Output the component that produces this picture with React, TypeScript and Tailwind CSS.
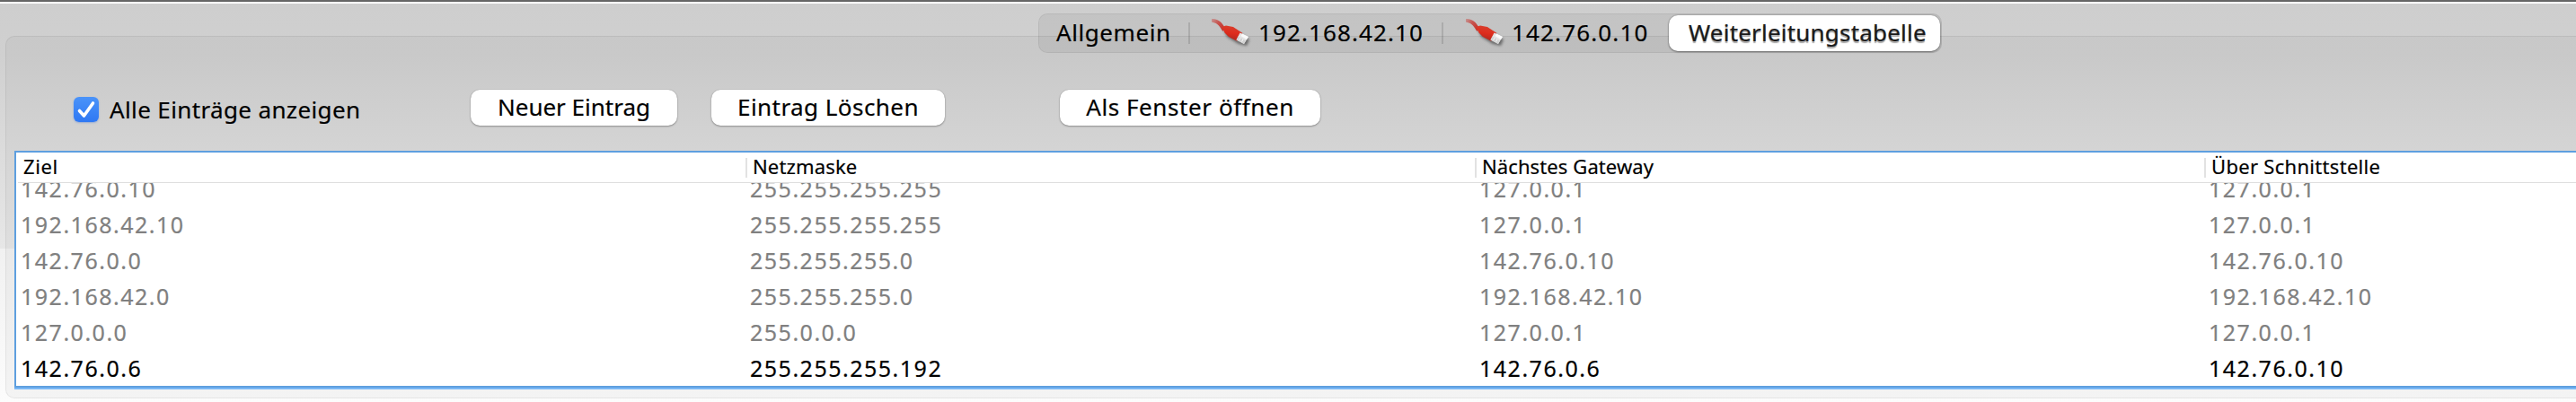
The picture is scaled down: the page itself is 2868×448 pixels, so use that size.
import React from "react";

type Entry = { cells: string[]; active?: boolean };

const columns = [
  { label: "Ziel", tracking: "tracking-[0.6px]" },
  { label: "Netzmaske", tracking: "tracking-[0.15px]" },
  { label: "Nächstes Gateway", tracking: "tracking-[0.1px]" },
  { label: "Über Schnittstelle", tracking: "tracking-[0.3px]" },
];

const entries: Entry[] = [
  { cells: ["142.76.0.10", "255.255.255.255", "127.0.0.1", "127.0.0.1"] },
  { cells: ["192.168.42.10", "255.255.255.255", "127.0.0.1", "127.0.0.1"] },
  { cells: ["142.76.0.0", "255.255.255.0", "142.76.0.10", "142.76.0.10"] },
  { cells: ["192.168.42.0", "255.255.255.0", "192.168.42.10", "192.168.42.10"] },
  { cells: ["127.0.0.0", "255.0.0.0", "127.0.0.1", "127.0.0.1"] },
  { cells: ["142.76.0.6", "255.255.255.192", "142.76.0.6", "142.76.0.10"], active: true },
];

function CableIcon() {
  return (
    <svg width="46" height="34" viewBox="0 0 46 34" className="shrink-0">
      <defs>
        <linearGradient id="cord" x1="0" y1="0" x2="1" y2="0.6">
          <stop offset="0" stopColor="#c9302a" stopOpacity="0.3" />
          <stop offset="0.5" stopColor="#c8423c" stopOpacity="0.85" />
          <stop offset="1" stopColor="#c4352d" />
        </linearGradient>
        <linearGradient id="boot" x1="0.6" y1="0" x2="0.4" y2="1">
          <stop offset="0" stopColor="#d8402f" />
          <stop offset="0.5" stopColor="#de2c1c" />
          <stop offset="1" stopColor="#a8281f" />
        </linearGradient>
        <filter id="soft" x="-30%" y="-30%" width="160%" height="160%">
          <feGaussianBlur stdDeviation="1.5" />
        </filter>
      </defs>
      <path d="M13 12 L30 16 L42 24 L39 31 L30 29 L17 21 Z" fill="#333" opacity="0.6" filter="url(#soft)" />
      <path d="M0 1 C6 0.500 11 4 14.500 10.500 L12.500 15 C9 10 8 6 0 4.500 Z" fill="url(#cord)" />
      <path d="M11.500 10 L16 8.500 L24 10 L34.500 17 C32 19 29 23 28.500 26 L19 21 L14.500 16.500 Z" fill="url(#boot)" />
      <path d="M31.500 16.500 L41 21 L36 29 L27.500 24.500 Z" fill="#e4e4e4" />
      <path d="M34 17.500 L41 21 L39 24 L32.500 20 Z" fill="#fafafa" />
      <path d="M29.500 20.500 L38 25.500 L36 29 L27.500 24.500 Z" fill="#d2d2d2" />
      <path d="M32 22 L30.500 25 M35 23.500 L33.500 26.500" stroke="#f4f4f4" strokeWidth="1" />
    </svg>
  );
}

function Push({ label, className }: { label: string; className: string }) {
  return (
    <button
      className={`flex h-10 items-center justify-center rounded-[10px] bg-white pb-[3px] text-[26px] leading-none shadow-[0_0_1px_rgba(0,0,0,0.35),0_1px_2px_rgba(0,0,0,0.3)] ${className}`}
    >
      {label}
    </button>
  );
}

export default function App() {
  return (
    <div className="h-[448px] w-[2868px] overflow-hidden border-t-2 border-[#666] bg-[linear-gradient(to_bottom,#cecece_0px,#d0d0d0_60px,#e7e7e7_275px,#f1f1f1_275px,#fcfcfc_446px)] font-['Noto_Sans',sans-serif] text-black [-webkit-text-stroke:0.2px]">
      <div className="h-0.5 bg-white" />
      <main className="mt-9 ml-1.5 h-[404px] rounded-l-[10px] border border-r-0 border-black/6 bg-black/3 pl-[9px]">
        <nav className="-mt-[26px] ml-[1140px] flex h-11 w-[1006px] items-center rounded-[10px] border border-black/6 bg-black/5 text-[26px] leading-none">
          <div className="w-[166px] pl-[19px] pb-[2px] tracking-[0.57px]">Allgemein</div>
          <div className="h-6 w-0.5 bg-black/12" />
          <div className="flex w-[280px] items-center pl-6">
            <CableIcon />
            <span className="pl-[6px] pb-[2px] tracking-[1.1px]">192.168.42.10</span>
          </div>
          <div className="h-6 w-0.5 bg-black/12" />
          <div className="flex w-[251px] items-center pl-[25px]">
            <CableIcon />
            <span className="pl-[5px] pb-[2px] tracking-[1.14px]">142.76.0.10</span>
          </div>
          <div className="flex h-10 w-[302px] shrink-0 items-center rounded-[10px] bg-white pb-[2px] pl-[22px] tracking-[0.2px] text-[#1a1a1a] shadow-[0_0_2px_rgba(0,0,0,0.4),0_1px_2px_rgba(0,0,0,0.35)] [text-shadow:0_2px_1px_rgba(0,0,0,0.35)]">
            Weiterleitungstabelle
          </div>
        </nav>

        <div className="mt-[41px] flex h-10 items-center">
          <label className="ml-[66px] flex w-[442px] items-center text-[26px] leading-none tracking-[0.37px]">
            <span className="mt-1 flex size-7 items-center justify-center rounded-[6px] bg-linear-to-b from-[#4a93f9] to-[#2f78f3] shadow-[0_1px_2px_rgba(40,100,220,0.35)]">
              <svg width="28" height="28" viewBox="0 0 28 28" fill="none">
                <path d="M6.500 15.500 L11.500 21 L21.500 7" stroke="white" strokeWidth="3.6" strokeLinecap="round" strokeLinejoin="round" />
              </svg>
            </span>
            <span className="pl-3 pt-[3px]">Alle Einträge anzeigen</span>
          </label>
          <Push label="Neuer Eintrag" className="w-[230px]" />
          <Push label="Eintrag Löschen" className="ml-[38px] w-[260px] tracking-[0.44px]" />
          <Push label="Als Fenster öffnen" className="ml-32 w-[290px] tracking-[0.58px]" />
        </div>

        <section className="mt-7 flex h-[264px] flex-col overflow-hidden border-2 border-r-0 border-[#5e9fdf] bg-white shadow-[0_2px_0_#7bb8f5]">
          <header className="ml-0.5 flex h-[34px] shrink-0 items-center border-b border-[#dedede] text-[22px] leading-none">
            {columns.map((c, i) => (
              <div key={c.label} className="flex w-[812px] shrink-0 items-center">
                <span className={`pl-1.5 pb-1 ${c.tracking}`}>{c.label}</span>
                {i < 3 && <span className="ml-auto h-[22px] w-0.5 bg-[#e2e2e2]" />}
              </div>
            ))}
          </header>
          <div className="ml-0.5 flex min-h-0 flex-1 flex-col justify-end overflow-hidden">
            {entries.map((e, r) => (
              <div
                key={r}
                className={`flex h-10 shrink-0 items-center text-[25px] leading-none tracking-[1.5px] ${e.active ? "text-black" : "text-[#808080]"}`}
              >
                {e.cells.map((v, i) => (
                  <div key={i} className="w-[812px] shrink-0 pl-[3px]">
                    {v}
                  </div>
                ))}
              </div>
            ))}
          </div>
        </section>
      </main>
    </div>
  );
}
